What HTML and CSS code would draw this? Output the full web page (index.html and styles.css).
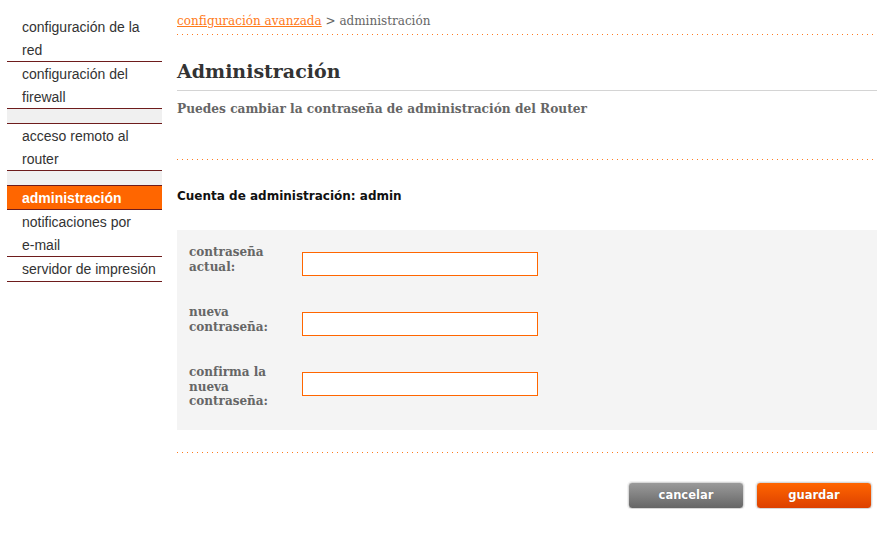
FILE: index.html
```html
<!DOCTYPE html>
<html lang="es">
<head>
<meta charset="utf-8">
<title>Administración</title>
<link rel="stylesheet" href="styles.css">
</head>
<body>
<div class="page">
  <nav class="sidebar">
    <a class="nav-item" href="#">configuración de la red</a>
    <a class="nav-item" href="#">configuración del firewall</a>
    <div class="nav-spacer"></div>
    <a class="nav-item" href="#">acceso remoto al router</a>
    <div class="nav-spacer"></div>
    <a class="nav-item active" href="#">administración</a>
    <a class="nav-item" href="#">notificaciones por <span class="nowrap">e-mail</span></a>
    <a class="nav-item" href="#">servidor de impresión</a>
  </nav>
  <main class="content">
    <div class="breadcrumb"><a href="#">configuración avanzada</a> &gt; administración</div>
    <div class="dots"></div>
    <h1 class="title">Administración</h1>
    <p class="subtitle">Puedes cambiar la contraseña de administración del Router</p>
    <div class="dots dots-2"></div>
    <h2 class="account">Cuenta de administración: admin</h2>
    <form class="form-box">
      <div class="form-row">
        <label class="form-label" for="p1">contraseña actual:</label>
        <input class="form-input" id="p1" type="password">
      </div>
      <div class="form-row">
        <label class="form-label" for="p2">nueva contraseña:</label>
        <input class="form-input" id="p2" type="password">
      </div>
      <div class="form-row">
        <label class="form-label" for="p3">confirma la nueva contraseña:</label>
        <input class="form-input" id="p3" type="password">
      </div>
    </form>
    <div class="dots dots-3"></div>
    <div class="actions">
      <button class="btn btn-cancel" type="button">cancelar</button>
      <button class="btn btn-save" type="button">guardar</button>
    </div>
  </main>
</div>
</body>
</html>
```

FILE: styles.css
```css
html, body {
  margin: 0;
  padding: 0;
  background: #fff;
}

.page {
  display: flex;
  align-items: flex-start;
}

.sidebar {
  width: 155px;
  margin: 15px 0 0 7px;
  display: flex;
  flex-direction: column;
  font-family: "Liberation Sans", Arial, sans-serif;
  font-size: 14px;
  line-height: 23px;
}

.nav-item {
  display: block;
  padding: 1px 0 0 15px;
  height: 45px;
  color: #333;
  text-decoration: none;
  border-bottom: 1px solid #6e1c1c;
}

.nav-item.active {
  height: 22px;
  background: #ff6600;
  color: #fff;
  font-weight: bold;
}

.nav-item:last-child {
  height: 23px;
}

.nowrap {
  white-space: nowrap;
}

.nav-spacer {
  height: 14px;
  background: #f0f0f0;
  border-bottom: 1px solid #6e1c1c;
}

.content {
  margin-left: 15px;
  width: 700px;
  font-family: "DejaVu Serif", serif;
}

.breadcrumb {
  padding-top: 13px;
  box-sizing: border-box;
  height: 34px;
  font-size: 12px;
  line-height: 16px;
  color: #666;
}

.breadcrumb a {
  color: #ff7a1a;
}

.dots {
  height: 1px;
  width: 696px;
  background-image: linear-gradient(to right, #ff7a1f 0, #ff7a1f 1px, transparent 1px, transparent 5px);
  background-size: 5px 1px;
  background-repeat: repeat-x;
}

.title {
  margin: 25px 0 0;
  font-size: 19px;
  line-height: 22px;
  font-weight: bold;
  color: #333;
  padding-bottom: 8px;
  border-bottom: 1px solid #d4d4d4;
}

.subtitle {
  margin: 10px 0 0;
  font-size: 12.2px;
  line-height: 16px;
  font-weight: bold;
  color: #666;
}

.dots-2 {
  margin-top: 42px;
}

.account {
  margin: 29px 0 0;
  font-family: "DejaVu Sans", sans-serif;
  font-size: 12px;
  line-height: 15px;
  font-weight: bold;
  color: #111;
}

.form-box {
  margin-top: 26px;
  background: #f4f4f4;
  padding: 15px 0 21px 12px;
  display: flex;
  flex-direction: column;
  gap: 29px;
}

.form-row {
  display: flex;
  align-items: flex-start;
}

.form-label {
  width: 113px;
  font-size: 12px;
  line-height: 14.5px;
  font-weight: bold;
  color: #666;
}

.form-input {
  margin: 7px 0 0;
  width: 236px;
  height: 24px;
  box-sizing: border-box;
  border: 1px solid #ff6600;
  background: #fff;
  padding: 0 4px;
  outline: none;
}

.dots-3 {
  margin-top: 22px;
}

.actions {
  display: flex;
  justify-content: flex-end;
  gap: 12px;
  margin-top: 29px;
  padding-right: 5px;
}

.btn {
  width: 116px;
  height: 27px;
  border: 1px solid #d8d8d8;
  border-radius: 4px;
  font-family: "DejaVu Sans", sans-serif;
  font-size: 11.5px;
  font-weight: bold;
  color: #fff;
  text-shadow: 0 0 1px rgba(0,0,0,0.25);
  box-shadow: 0 0 0 1px #f2f2f2;
  padding: 0;
}

.btn-cancel {
  background: linear-gradient(to bottom, #9a9a9a, #666);
}

.btn-save {
  background: linear-gradient(to bottom, #ff6600, #dd4000);
}
```
